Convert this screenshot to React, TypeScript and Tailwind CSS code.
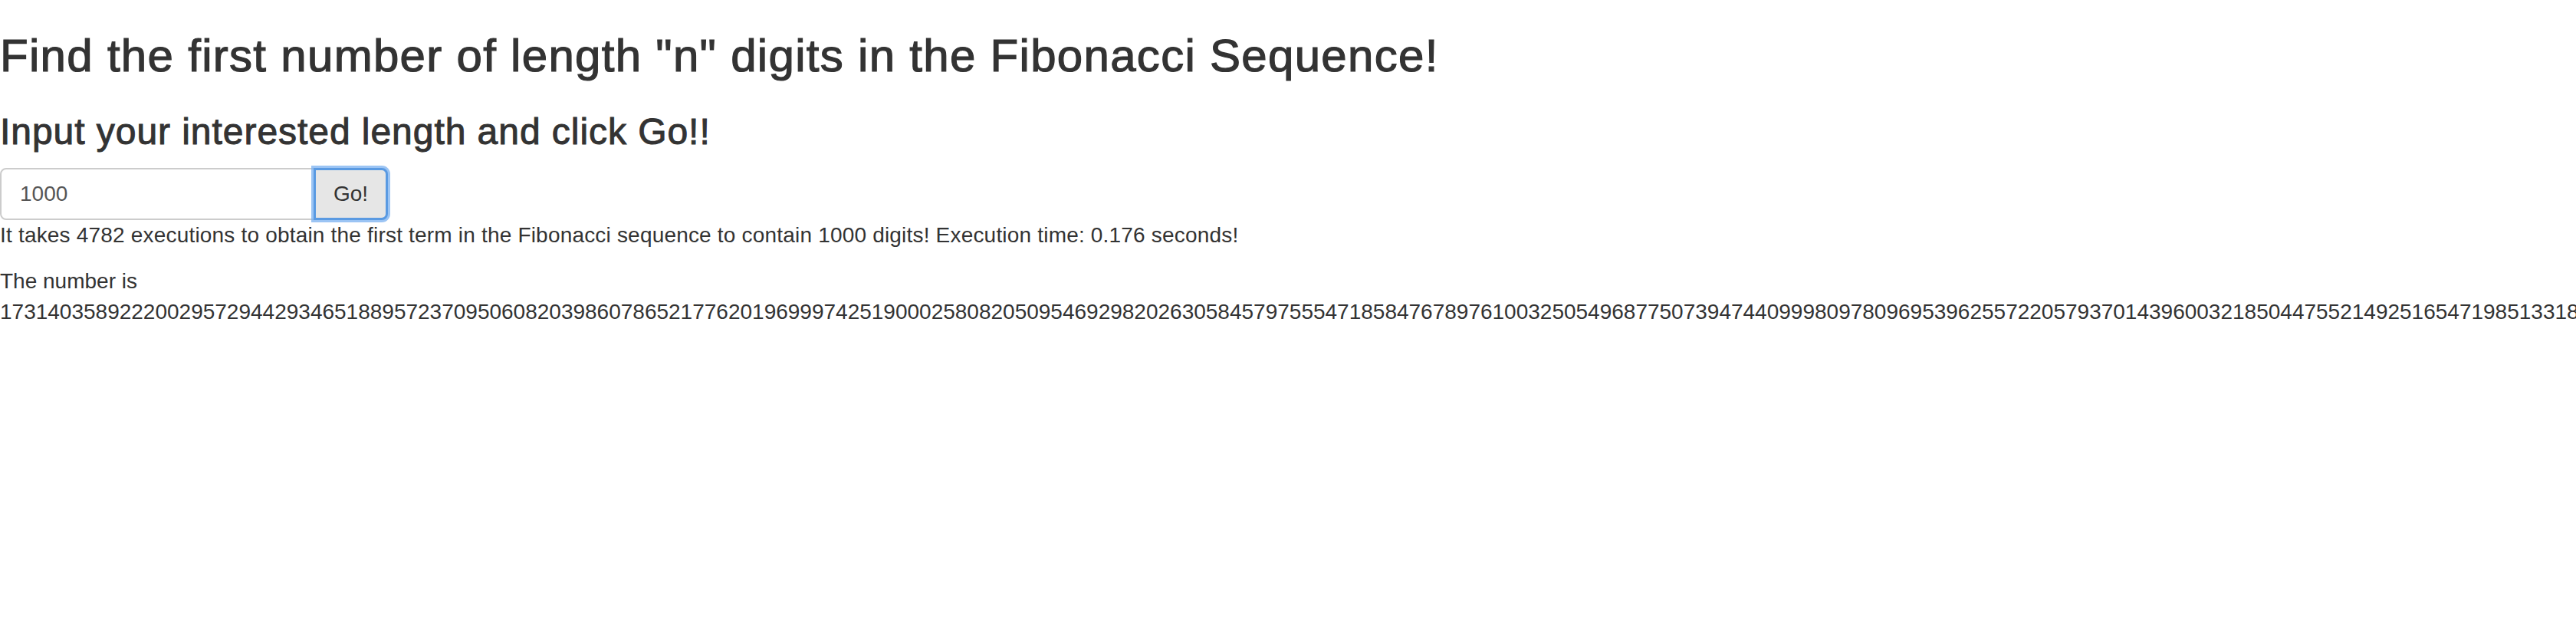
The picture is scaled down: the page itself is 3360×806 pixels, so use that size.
import { useState } from "react";

const DIGITS =
  "17314035892220029572944293465188957237095060" +
  "8203986078652177620196999742519000258082050" +
  "9546929820263058457975554718584767897610032" +
  "5054968775073947440999809780969539625572205" +
  "7937014396003218504475521492516547198513318";

export default function App() {
  const [length, setLength] = useState("1000");

  return (
    <div className="h-[806px] w-full overflow-hidden bg-white font-['Liberation_Sans',Arial,sans-serif] text-[#333]">
      <div className="flex flex-col pt-[40px]">
        <h2 className="text-[60px] leading-[66px] font-normal tracking-[1.3px] [-webkit-text-stroke:1.2px_#333]">
          Find the first number of length "n" digits in the Fibonacci Sequence!
        </h2>
        <h3 className="mt-[40px] text-[48px] leading-[52.8px] font-normal tracking-[0.95px] [-webkit-text-stroke:1px_#333]">
          Input your interested length and click Go!!
        </h3>

        <div className="mt-[20px] flex h-[68px]">
          <input
            value={length}
            onChange={(event) => setLength(event.target.value)}
            className="h-[68px] w-[411px] rounded-l-[8px] border-2 border-[#ccc] bg-white px-[24px] text-[28px] text-[#555] outline-none"
          />
          <button className="relative -ml-[2px] h-[68px] w-[97px] rounded-r-[8px] border-[3px] border-[#5a9ae2] bg-[#e6e6e6] text-[28px] text-[#333] shadow-[0_0_0_3px_rgba(122,176,240,0.75)]">
            Go!
          </button>
        </div>

        <div className="text-[28px] leading-[40px] tracking-[0.19px]">
          It takes 4782 executions to obtain the first term in the Fibonacci sequence to contain 1000 digits!
          Execution time: 0.176 seconds!
        </div>

        <p className="mt-[20px] whitespace-nowrap text-[28px] leading-[40px]">
          The number is
          <br />
          {DIGITS}
        </p>
      </div>
    </div>
  );
}
